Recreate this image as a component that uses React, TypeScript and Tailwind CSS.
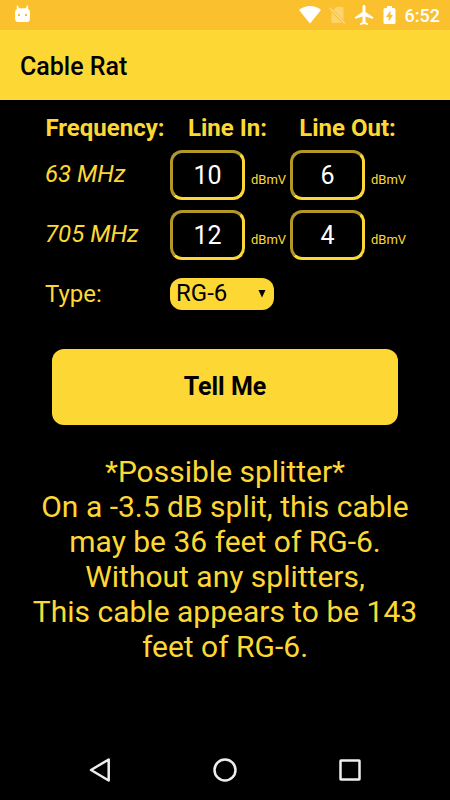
import { useState } from "react";

function StatusBar() {
  return (
    <div className="flex h-[30px] items-center justify-between bg-[#fbc02d] pr-[10px] pl-[14px] text-white">
      <svg width="17" height="20" viewBox="0 0 17 20" aria-hidden="true">
        <path
          fill="currentColor"
          fillRule="evenodd"
          d="M3.4 0.2 L5.2 3.3 H11.6 L13.4 0.2 L14.3 0.6 L14 3.8 Q15.8 4.8 15.9 7 V14 Q15.7 17 13 17 H4 Q1.3 17 1.1 14 V7 Q1.2 4.8 3 3.8 L2.6 0.6 Z M4 8.9 V11 H6 V8.9 Z M11 8.9 V11 H13 V8.9 Z"
        />
      </svg>
      <div className="flex items-center">
        <svg className="mr-2" width="22" height="18" viewBox="0 0 22 18" aria-hidden="true">
          <path fill="currentColor" d="M11 17.5 L0 4 C6.5 -1.3 15.5 -1.3 22 4 Z" />
        </svg>
        <svg className="mr-[9px]" width="17" height="18" viewBox="0 0 17 18" aria-hidden="true">
          <path fill="currentColor" opacity="0.3" d="M7.5 1 H13.5 Q14.5 1 14.5 2 V14 L4.3 3.8 Z M2.5 6.2 L13.3 17 H3.5 Q2.5 17 2.5 16 Z" />
          <path stroke="currentColor" strokeWidth="1.5" opacity="0.4" d="M0.5 1.8 L15.8 17.2" />
        </svg>
        <svg className="mr-2.5" width="18" height="20" viewBox="3 2 18 20" aria-hidden="true">
          <path
            fill="currentColor"
            d="M21 16v-2l-7.5-5V3.5c0-.83-.67-1.5-1.5-1.5s-1.5.67-1.5 1.5V9L3 14v2l7.5-2.5V19L8 20.500V22l4-1 4 1v-1.500L13.500 19v-5.500L21 16z"
          />
        </svg>
        <svg className="mr-2" width="14" height="18" viewBox="0 0 14 18" aria-hidden="true">
          <path
            fill="currentColor"
            fillRule="evenodd"
            d="M4 0 H9 V2 H11 Q12.5 2 12.5 3.5 V16.5 Q12.5 18 11 18 H2 Q0.5 18 0.5 16.5 V3.5 Q0.5 2 2 2 H4 Z M7.5 4.5 L3 11 H5.7 V15.5 L10 9 H7.5 Z"
          />
        </svg>
        <span className="pt-0.5 text-[18px] leading-[28px] font-medium">6:52</span>
      </div>
    </div>
  );
}

function LevelField({ label, initial }: { label: string; initial: string }) {
  const [value, setValue] = useState(initial);
  return (
    <label className="flex h-[50px] items-center gap-1.5">
      <input
        aria-label={label}
        inputMode="numeric"
        value={value}
        onChange={(e) => setValue(e.target.value)}
        className="h-[50px] w-[75px] rounded-xl border-3 border-t-[#b39826] border-r-[#fdd835] border-b-[#fdd835] border-l-[#b39826] bg-black text-center text-[25px] text-white outline-none"
      />
      <span className="pt-2.5 text-[13px] leading-[16px]">dBmV</span>
    </label>
  );
}

function NavBar() {
  return (
    <nav className="flex h-[60px] items-center justify-center gap-[95px] text-[#eeeeee]">
      <button aria-label="Back" className="flex size-[30px] items-center justify-center">
        <svg width="30" height="30" viewBox="0 0 30 30" fill="none">
          <path stroke="currentColor" strokeWidth="2.5" strokeLinejoin="round" d="M23.7 4.5 V25.5 L6 15 Z" />
        </svg>
      </button>
      <button aria-label="Home" className="flex size-[30px] items-center justify-center">
        <svg width="30" height="30" viewBox="0 0 30 30" fill="none">
          <circle cx="15" cy="15" r="10.5" stroke="currentColor" strokeWidth="2.5" />
        </svg>
      </button>
      <button aria-label="Overview" className="flex size-[30px] items-center justify-center">
        <svg width="30" height="30" viewBox="0 0 30 30" fill="none">
          <rect x="5.5" y="5.5" width="19" height="19" rx="0.5" stroke="currentColor" strokeWidth="2.5" />
        </svg>
      </button>
    </nav>
  );
}

export default function App() {
  return (
    <div className="flex min-h-screen flex-col bg-black font-['Roboto','Liberation_Sans',sans-serif] text-[#fdd835]">
      <StatusBar />
      <header className="flex h-[70px] items-center bg-[#fdd835] px-5 text-black">
        <h1 className="pt-1 text-[25px] leading-[30px] font-medium">Cable Rat</h1>
      </header>

      <main className="flex flex-1 flex-col items-center pt-[13px]">
        <div className="grid grid-cols-[120px_115px_115px] gap-x-[5px] text-[24px] leading-[30px]">
          <div className="text-center font-bold">Frequency:</div>
          <div className="text-center font-bold">Line In:</div>
          <div className="text-center font-bold">Line Out:</div>

          <div className="mt-4 italic">63 MHz</div>
          <div className="mt-[7px]">
            <LevelField label="63 MHz line in" initial="10" />
          </div>
          <div className="mt-[7px]">
            <LevelField label="63 MHz line out" initial="6" />
          </div>

          <div className="mt-[19px] italic">705 MHz</div>
          <div className="mt-2.5">
            <LevelField label="705 MHz line in" initial="12" />
          </div>
          <div className="mt-2.5">
            <LevelField label="705 MHz line out" initial="4" />
          </div>

          <label htmlFor="cable-type" className="mt-[19px]">
            Type:
          </label>
          <div className="relative mt-[18px] h-8 w-[104px]">
            <select
              id="cable-type"
              defaultValue="RG-6"
              className="block h-8 w-full appearance-none rounded-xl bg-[#fdd835] pb-0.5 pl-1.5 text-[24px] leading-[30px] text-black outline-none"
            >
              <option>RG-6</option>
              <option>RG-11</option>
              <option>RG-59</option>
            </select>
            <svg
              className="pointer-events-none absolute top-3 right-2"
              width="8"
              height="8"
              viewBox="0 0 8 8"
              aria-hidden="true"
            >
              <path d="M0.5 0 H7.5 L4 7.5 Z" fill="#000" />
            </svg>
          </div>
        </div>

        <div className="mt-[39px] w-full px-[52px]">
          <button className="block h-[76px] w-full rounded-xl bg-[#fdd835] text-[25px] leading-[30px] font-bold text-black">
            Tell Me
          </button>
        </div>

        <p className="mt-[29px] px-5 text-center text-[30px] leading-[35px]">
          *Possible splitter*
          <br />
          On a -3.5 dB split, this cable may be 36 feet of RG-6.
          <br />
          Without any splitters,
          <br />
          This cable appears to be 143 feet of RG-6.
        </p>
      </main>

      <NavBar />
    </div>
  );
}
